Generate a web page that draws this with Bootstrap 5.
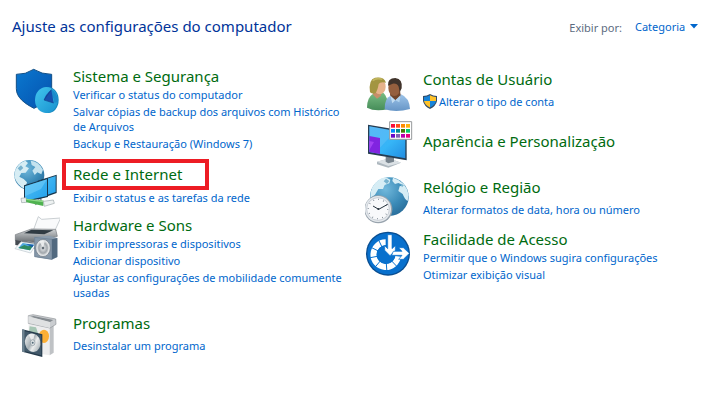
<!DOCTYPE html>
<html lang="pt-BR">
<head>
<meta charset="utf-8">
<meta name="viewport" content="width=device-width, initial-scale=1">
<title>Painel de Controle</title>
<link href="https://cdn.jsdelivr.net/npm/bootstrap@5.3.0/dist/css/bootstrap.min.css" rel="stylesheet">
<style>
body{font-family:"Segoe UI","Noto Sans",sans-serif;font-size:11px;line-height:15px;color:#5c6b80;background:#fff}
a{color:#0066cc;text-decoration:none}
a:hover{text-decoration:underline}
.page-head{padding:16px 22px 0 12px;height:66px}
.page-title{font-size:15px;font-weight:400;line-height:20px;color:#003399}
.view-by{padding-top:2px;gap:13px}
.view-select{border:0;appearance:none;font-size:11px;line-height:18px;padding:0 12px 0 0;color:#0066cc;background:url("data:image/svg+xml,%3Csvg xmlns='http://www.w3.org/2000/svg' width='8' height='5'%3E%3Cpath d='M0 0h8L4 4.5z' fill='%230066cc'/%3E%3C/svg%3E") no-repeat right 6px}
.left-col{padding:0 10px 0 14px}
.right-col{padding:3px 6px 0 5px}
.left-col .cat{gap:13px}
.right-col .cat{gap:10px}
.cat-icon{width:46px;height:48px;flex:none}
.right-col .cat-icon{width:48px}
.cat-name{font-size:15px;font-weight:400;line-height:20px;margin:0}
.cat-name a{color:#006b10}
.tasks{margin:1px 0 0;display:flex;flex-direction:column;gap:2px}
.tasks.loose{margin-top:5px}
.highlight{border:4px solid #ed1c24;line-height:23px;margin-left:-11px;padding-left:7px;width:147px}
.highlight + .tasks{margin-top:0}
.gap-s{margin-bottom:4px}.gap-m{margin-bottom:8px}.gap-l{margin-bottom:13px}
.drop{padding-top:10px}
.with-shield{gap:2px}
.uac{width:14px;height:15px;flex:none}
</style>
<script src="https://cdn.jsdelivr.net/npm/bootstrap@5.3.0/dist/js/bootstrap.bundle.min.js"></script>
</head>
<body>
<header class="page-head d-flex justify-content-between align-items-start">
  <h1 class="page-title mb-0">Ajuste as configurações do computador</h1>
  <div class="view-by d-flex align-items-center">
    <label for="view">Exibir por:</label>
    <select id="view" class="view-select"><option>Categoria</option></select>
  </div>
</header>
<main class="row g-0">
  <div class="col-6 left-col">
    <section class="cat d-flex gap-m">
      <svg class="cat-icon" viewBox="18 18 138 144" aria-hidden="true">
        <defs>
          <linearGradient id="sh" x1="0" y1="0" x2="1" y2="1"><stop offset="0" stop-color="#0a78cf"/><stop offset="1" stop-color="#0551ae"/></linearGradient>
          <linearGradient id="pie" x1="0" y1="0" x2="1" y2="1"><stop offset="0" stop-color="#42c5ee"/><stop offset="1" stop-color="#1791cf"/></linearGradient>
        </defs>
        <path d="M25 43Q53 44 77 28Q101 43 131 43V90C130 116 103 133 78 145C49 130 25 112 25 86Z" fill="url(#sh)" stroke="#124f86" stroke-width="3"/>
        <ellipse cx="121" cy="120" rx="31" ry="39" fill="#1687bd"/>
        <ellipse cx="115" cy="120" rx="34" ry="39" fill="url(#pie)"/>
        <path d="M130 88Q149 99 150 126L139 128Q139 111 126 104Z" fill="#1c8bcb"/>
        <path d="M130 89L137 129L108 119Q112 103 130 89" fill="#174fae"/>
        <path d="M130 89L108 120L137 129" fill="none" stroke="#103c88" stroke-width="2"/>
      </svg>
      <div><h2 class="cat-name"><a href="#">Sistema e Segurança</a></h2>
        <div class="tasks"><a href="#">Verificar o status do computador</a><a href="#">Salvar cópias de backup dos arquivos com Histórico de Arquivos</a><a href="#">Backup e Restauração (Windows 7)</a></div></div>
    </section>
    <section class="cat d-flex gap-m">
      <svg class="cat-icon" viewBox="18 0 138 144" aria-hidden="true">
        <defs>
          <radialGradient id="gl" cx=".4" cy=".3" r=".75"><stop offset="0" stop-color="#72b9dc"/><stop offset=".6" stop-color="#3b8bb8"/><stop offset="1" stop-color="#286c99"/></radialGradient>
          <linearGradient id="scr" x1="0" y1="0" x2="1" y2="1"><stop offset="0" stop-color="#4fc0f5"/><stop offset="1" stop-color="#23a0eb"/></linearGradient>
        </defs>
        <circle cx="64" cy="48" r="45" fill="url(#gl)"/>
        <path d="M22 32Q34 10 52 5L60 12L52 22L63 28L53 41L40 42L34 53L47 60L57 70L51 90Q28 80 19 53Z" fill="#d7edf4"/>
        <path d="M68 5Q92 7 105 32L100 46L88 40L80 48L73 35L82 24L71 18Z" fill="#c4e3ef"/>
        <path d="M29 28l10-9 7 8-10 9z" fill="#79b3cf"/>
        <path d="M89 65L146 47V102L89 122Z" fill="#17364c"/><path d="M92 67L143 51V99L92 116Z" fill="url(#scr)"/>
        <path d="M48 79L120 57V114L48 130Z" fill="#17364c"/><path d="M51 82L117 61V111L51 125Z" fill="url(#scr)"/>
        <path d="M51 82L117 61L99 90L51 112Z" fill="#83d4fa" opacity=".45"/>
        <path d="M98 120v9M89 130l-8 6" stroke="#87959c" stroke-width="6"/>
        <path d="M39 118L54 116L56 130L41 131Z" fill="#e9eeee" stroke="#9da8aa" stroke-width="2"/>
        <path d="M54 119L107 125L106 141L55 130Z" fill="#4fb250"/><path d="M54 119L107 125V130L55 123Z" fill="#8ed888"/>
        <path d="M106 127L136 123L139 133L109 142Z" fill="#edf1f1" stroke="#9da8aa" stroke-width="2"/>
      </svg>
      <div><h2 class="cat-name highlight"><a href="#">Rede e Internet</a></h2>
        <div class="tasks"><a href="#">Exibir o status e as tarefas da rede</a></div></div>
    </section>
    <section class="cat d-flex gap-l">
      <svg class="cat-icon" viewBox="18 18 138 144" aria-hidden="true">
        <defs>
          <linearGradient id="pr" x1="0" y1="0" x2="0" y2="1"><stop offset="0" stop-color="#d1d4d6"/><stop offset="1" stop-color="#686d72"/></linearGradient>
          <radialGradient id="cone"><stop offset="0" stop-color="#727981"/><stop offset=".25" stop-color="#d3d6d9"/><stop offset=".7" stop-color="#a0a6ab"/><stop offset="1" stop-color="#e4e6e7"/></radialGradient>
        </defs>
        <path d="M76 64L91 23L101 31L158 27L136 75Z" fill="#f9fafb" stroke="#b1b8bd" stroke-width="2"/>
        <path d="M22 77L70 60L143 61L148 82L80 100L22 94Z" fill="url(#pr)" stroke="#72777b" stroke-width="2"/>
        <path d="M70 62L136 64L109 76L48 73Z" fill="#303b43"/>
        <path d="M22 93L88 103L81 119L22 108Z" fill="#454b51"/>
        <path d="M39 98L85 105L68 132L21 119Z" fill="#f6fafc" stroke="#bbc5cb" stroke-width="2"/>
        <path d="M44 102L78 107L66 124L31 117Z" fill="#4fa7dc"/><path d="M31 117L49 108L60 112L76 108L66 124Z" fill="#2f8b61"/><path d="M54 105L78 107L73 115Z" fill="#195ea9"/>
        <path d="M80 84L124 80L148 87V144L132 152L80 143Z" fill="#8c9dae"/>
        <path d="M80 85L132 91V151L80 143Z" fill="#8496a8" stroke="#697d91" stroke-width="2"/>
        <path d="M132 91L148 87V144L132 151Z" fill="#52697f"/>
        <ellipse cx="105" cy="117" rx="22" ry="26" fill="#dfe2e5" stroke="#69747e" stroke-width="2"/>
        <ellipse cx="105" cy="117" rx="18" ry="22" fill="url(#cone)"/>
        <path d="M105 117L95 98Q103 92 110 98Z" fill="#f6f7f8" opacity=".8"/><circle cx="105" cy="117" r="4" fill="#646e77"/>
      </svg>
      <div><h2 class="cat-name"><a href="#">Hardware e Sons</a></h2>
        <div class="tasks"><a href="#">Exibir impressoras e dispositivos</a><a href="#">Adicionar dispositivo</a><a href="#">Ajustar as configurações de mobilidade comumente usadas</a></div></div>
    </section>
    <section class="cat d-flex">
      <svg class="cat-icon" viewBox="18 27 138 144" aria-hidden="true">
        <defs><linearGradient id="disc" x1="0" y1="0" x2="1" y2="1"><stop offset="0" stop-color="#fafafa"/><stop offset=".45" stop-color="#a6afb4"/><stop offset=".6" stop-color="#eceeee"/><stop offset="1" stop-color="#8e9ba2"/></linearGradient></defs>
        <path d="M62 52L125 64V154L62 144Z" fill="#ededee"/>
        <path d="M125 64L137 58V146L125 154Z" fill="#bfc2c5"/>
        <path d="M61 35L75 32L143 45L144 61L126 72L61 58Z" fill="#cacdd0" stroke="#8f9499" stroke-width="2"/>
        <path d="M67 39L76 36L136 48L125 55Z" fill="#858b90"/><path d="M61 37L126 54V72L61 57Z" fill="#dfe1e2"/>
        <path d="M65 67L84 70L94 99L62 93Z" fill="#a6c6b4"/>
        <ellipse cx="108" cy="97" rx="15" ry="20" fill="#fcaf35"/>
        <path d="M43 76L103 91V159L43 143Z" fill="#253a4b"/><path d="M43 76L50 78V145L43 143Z" fill="#6f8593"/>
        <path d="M51 82L100 94V154L51 142Z" fill="#42596a"/>
        <ellipse cx="74" cy="116" rx="23" ry="28" fill="url(#disc)" transform="rotate(-12 74 116)"/>
        <path d="M74 116L62 92Q71 87 80 91Z" fill="#fff" opacity=".7"/>
        <ellipse cx="74" cy="116" rx="7" ry="9" fill="#dee3e5" stroke="#87949b" stroke-width="2"/><circle cx="74" cy="116" r="3" fill="#526a78"/>
      </svg>
      <div><h2 class="cat-name"><a href="#">Programas</a></h2>
        <div class="tasks loose"><a href="#">Desinstalar um programa</a></div></div>
    </section>
  </div>
  <div class="col-6 right-col">
    <section class="cat d-flex gap-s">
      <svg class="cat-icon" viewBox="21 12 144 144" aria-hidden="true">
        <defs><linearGradient id="gr" x1="0" y1="0" x2="0" y2="1"><stop offset="0" stop-color="#78bc83"/><stop offset="1" stop-color="#468d59"/></linearGradient><linearGradient id="bl" x1="0" y1="0" x2="0" y2="1"><stop offset="0" stop-color="#9dc4e9"/><stop offset="1" stop-color="#6695c6"/></linearGradient></defs>
        <path d="M27 128Q27 99 43 88L76 83Q91 96 91 132Q51 141 27 128" fill="url(#gr)"/>
        <path d="M46 76L71 77L69 92L57 101L45 89Z" fill="#c68f6a"/>
        <ellipse cx="65" cy="65" rx="18" ry="23" fill="#e6b28b"/>
        <path d="M36 82Q31 43 51 38Q79 34 84 53Q66 50 62 57Q59 76 52 85Q44 89 36 82" fill="#a39541"/>
        <path d="M44 47Q55 37 73 43" fill="none" stroke="#c1b55d" stroke-width="5"/>
        <path d="M80 133Q79 99 98 92L129 88Q154 98 156 132Q115 144 80 133" fill="url(#bl)"/>
        <path d="M95 78L126 75L128 93L112 106L97 92Z" fill="#70452b"/>
        <ellipse cx="109" cy="69" rx="18" ry="24" fill="#955f3e"/>
        <path d="M90 62Q88 39 112 39Q135 42 131 70L125 82L122 65Q117 54 104 56Z" fill="#40332b"/>
        <path d="M97 92L112 106L103 115Z" fill="#c2dcf1"/><path d="M128 90L112 106L124 112Z" fill="#b1d2ee"/>
      </svg>
      <div><h2 class="cat-name"><a href="#">Contas de Usuário</a></h2>
        <div class="tasks loose"><a href="#" class="with-shield d-flex"><svg class="uac" viewBox="0 0 14 15" aria-hidden="true"><path d="M7 0Q10 2 14 2V7Q13 12 7 15Q1 12 0 7V2Q4 2 7 0" fill="#344b65"/><path d="M7 1.3V7H1V3Q4 3 7 1.3M7 7H13Q12 11 7 13.6Z" fill="#1683d8"/><path d="M7 1.3V7H13V3Q10 3 7 1.3M7 7H1Q2 11 7 13.6Z" fill="#ffc229"/></svg>Alterar o tipo de conta</a></div></div>
    </section>
    <section class="cat d-flex gap-m">
      <svg class="cat-icon" viewBox="21 18 144 144" aria-hidden="true">
        <defs><linearGradient id="mon" x1="0" y1="0" x2="1" y2="1"><stop offset="0" stop-color="#46aef5"/><stop offset=".55" stop-color="#36b5f7"/><stop offset="1" stop-color="#228de1"/></linearGradient></defs>
        <path d="M57 140L94 130L129 143L91 158L57 148Z" fill="#aeb8bf"/><path d="M57 140L94 130L129 143L91 153Z" fill="#dbe1e5"/>
        <path d="M83 124L108 128V140L91 145L83 140Z" fill="#77838d"/>
        <path d="M30 29L146 49V136L30 116Z" fill="#263d52"/><path d="M34 34L142 53V130L34 111Z" fill="url(#mon)"/>
        <path d="M34 34L112 48L52 113L34 110Z" fill="#81ccfa" opacity=".3"/>
        <path d="M34 63L66 69V117L34 111Z" fill="#8124e0"/><path d="M34 78L48 81L34 105Z" fill="#a341f3"/>
        <path d="M95 20H161V73H95Z" fill="#fff" stroke="#969a9c" stroke-width="3"/>
        <path d="M99 27h12v11H99z" fill="#fa0d38"/><path d="M114 27h12v11h-12z" fill="#ff4b18"/><path d="M129 27h12v11h-12z" fill="#ff8b00"/><path d="M144 27h12v11h-12z" fill="#ffb20d"/>
        <path d="M99 42h12v11H99z" fill="#008cff"/><path d="M114 42h12v11h-12z" fill="#008d91"/><path d="M129 42h12v11h-12z" fill="#467b08"/><path d="M144 42h12v11h-12z" fill="#00cc6a"/>
        <path d="M99 57h12v11H99z" fill="#6808c7"/><path d="M114 57h12v11h-12z" fill="#8161b3"/><path d="M129 57h12v11h-12z" fill="#b900ad"/><path d="M144 57h12v11h-12z" fill="#e8007c"/>
      </svg>
      <div class="drop"><h2 class="cat-name"><a href="#">Aparência e Personalização</a></h2></div>
    </section>
    <section class="cat d-flex gap-s">
      <svg class="cat-icon" viewBox="21 24 144 144" aria-hidden="true">
        <circle cx="94" cy="83" r="58" fill="url(#gl)"/>
        <path d="M43 55Q57 29 83 25L97 32L94 43L80 48L75 60L61 60L51 77L37 87Q36 69 43 55" fill="#d6edf5"/>
        <path d="M105 26Q144 37 152 77L149 96Q140 91 134 75L121 66L125 52L137 49L121 42L111 45L103 36Z" fill="#d6edf5"/>
        <path d="M84 29l10 7-7 9-10-8zM127 44l10 5-5 6z" fill="#78b4d0"/>
        <circle cx="61" cy="121" r="42" fill="#98a3ad"/><circle cx="60" cy="120" r="39" fill="#e5e9ed"/><circle cx="60" cy="120" r="34" fill="#f8f9fb" stroke="#b5bdc5" stroke-width="2"/>
        <circle cx="60" cy="120" r="29" fill="none" stroke="#626f7b" stroke-width="4" stroke-dasharray="2 13.2"/>
        <path d="M45 111L62 121L89 106" fill="none" stroke="#26323d" stroke-width="3"/><circle cx="61" cy="120" r="3" fill="#26323d"/>
      </svg>
      <div><h2 class="cat-name"><a href="#">Relógio e Região</a></h2>
        <div class="tasks loose"><a href="#">Alterar formatos de data, hora ou número</a></div></div>
    </section>
    <section class="cat d-flex">
      <svg class="cat-icon" viewBox="21 6 144 144" aria-hidden="true">
        <circle cx="90" cy="80" r="66" fill="#0a4e91"/><circle cx="90" cy="80" r="62" fill="#0870cd"/>
        <path d="M83 46A37 37 0 1 0 120 88" fill="none" stroke="#fff" stroke-width="18"/>
        <path d="M83 83L58 31M83 83L35 59M83 83L32 93M83 83L49 123M83 83L87 138M83 83L122 124" stroke="#0870cd" stroke-width="3"/>
        <circle cx="85" cy="82" r="28" fill="#0870cd"/>
        <path d="M89 23H102V65L112 56V70L96 86L80 70V56L89 65Z" fill="#fff" stroke="#0870cd" stroke-width="2"/>
        <path d="M106 73H132L122 62H136L154 79L136 97H122L132 85H101Z" fill="#fff" stroke="#0870cd" stroke-width="2"/>
      </svg>
      <div><h2 class="cat-name"><a href="#">Facilidade de Acesso</a></h2>
        <div class="tasks"><a href="#">Permitir que o Windows sugira configurações</a><a href="#">Otimizar exibição visual</a></div></div>
    </section>
  </div>
</main>
</body>
</html>
